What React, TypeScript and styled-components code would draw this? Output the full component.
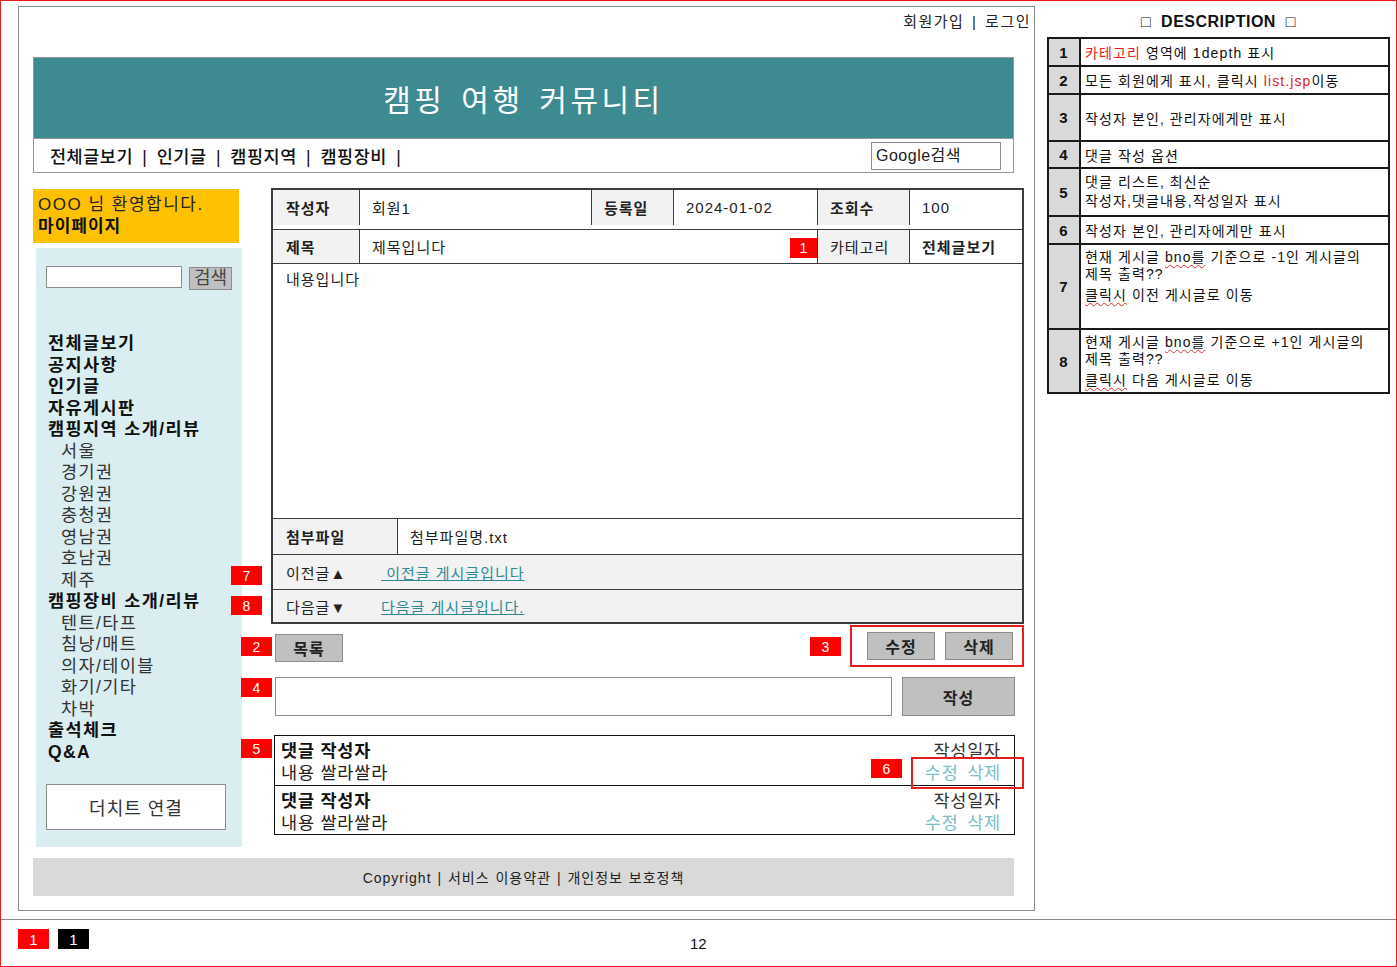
import styled, { createGlobalStyle } from 'styled-components'
import { ReactNode } from 'react'

const GlobalStyle = createGlobalStyle`
  * { box-sizing: border-box; }
  body {
    margin: 0;
    background: #fff;
    color: #111;
    font-family: "Liberation Sans", "Noto Sans CJK KR", sans-serif;
  }
`

type MenuEntry = { label: string; sub?: boolean }

const menu: MenuEntry[] = [
  { label: '전체글보기' },
  { label: '공지사항' },
  { label: '인기글' },
  { label: '자유게시판' },
  { label: '캠핑지역 소개/리뷰' },
  { label: '서울', sub: true },
  { label: '경기권', sub: true },
  { label: '강원권', sub: true },
  { label: '충청권', sub: true },
  { label: '영남권', sub: true },
  { label: '호남권', sub: true },
  { label: '제주', sub: true },
  { label: '캠핑장비 소개/리뷰' },
  { label: '텐트/타프', sub: true },
  { label: '침낭/매트', sub: true },
  { label: '의자/테이블', sub: true },
  { label: '화기/기타', sub: true },
  { label: '차박', sub: true },
  { label: '출석체크' },
  { label: 'Q&A' },
]

type DescRow = { no: number; h: number; top?: boolean; body: ReactNode }

// built at render time, the styled parts are declared further down
const getDescRows = (): DescRow[] => [
  { no: 1, h: 26, body: <p><Red>카테고리</Red> 영역에 1depth 표시</p> },
  { no: 2, h: 28, body: <p>모든 회원에게 표시, 클릭시 <Red>list.jsp</Red>이동</p> },
  { no: 3, h: 47, body: <p>작성자 본인, 관리자에게만 표시</p> },
  { no: 4, h: 27, body: <p>댓글 작성 옵션</p> },
  { no: 5, h: 48, body: <><Line>댓글 리스트, 최신순</Line><Line>작성자,댓글내용,작성일자 표시</Line></> },
  { no: 6, h: 28, body: <p>작성자 본인, 관리자에게만 표시</p> },
  {
    no: 7, h: 85, top: true,
    body: (
      <>
        <Tight>현재 게시글 <Typo>bno를</Typo> 기준으로 -1인 게시글의</Tight>
        <Tight>제목 출력??</Tight>
        <Gap><Typo>클릭시</Typo> 이전 게시글로 이동</Gap>
      </>
    ),
  },
  {
    no: 8, h: 64,
    body: (
      <>
        <Tight>현재 게시글 <Typo>bno를</Typo> 기준으로 +1인 게시글의</Tight>
        <Tight>제목 출력??</Tight>
        <Gap><Typo>클릭시</Typo> 다음 게시글로 이동</Gap>
      </>
    ),
  },
]

const comments = [
  { author: '댓글 작성자', text: '내용 쌀라쌀라', date: '작성일자' },
  { author: '댓글 작성자', text: '내용 쌀라쌀라', date: '작성일자' },
]

const App = () => {
  const descRows = getDescRows()

  return (
    <Page>
      <GlobalStyle />
      <Workspace>
        <Wireframe>
          <TopLinks>회원가입 | 로그인</TopLinks>
          <Header>
            <Banner>캠핑 여행 커뮤니티</Banner>
            <NavBar>
              <NavLinks>전체글보기 | 인기글 | 캠핑지역 | 캠핑장비 |</NavLinks>
              <GoogleBox>Google검색</GoogleBox>
            </NavBar>
          </Header>

          <Body>
            <Sidebar>
              <Welcome>
                <div>OOO 님 환영합니다.</div>
                <strong>마이페이지</strong>
              </Welcome>
              <SideNav>
                <SearchRow>
                  <SearchInput />
                  <SearchButton>검색</SearchButton>
                </SearchRow>
                <Menu>
                  {menu.map((m) => (
                    <MenuItem key={m.label} $sub={m.sub}>{m.label}</MenuItem>
                  ))}
                </Menu>
                <OutLink>더치트 연결</OutLink>
              </SideNav>
            </Sidebar>

            <Main>
              <Board>
                <BoardRow $cols="86px 232px 82px 144px 92px 1fr" $h={39}>
                  <Cell $label>작성자</Cell>
                  <Cell>회원1</Cell>
                  <Cell $label>등록일</Cell>
                  <Cell>2024-01-02</Cell>
                  <Cell $label>조회수</Cell>
                  <Cell>100</Cell>
                </BoardRow>
                <BoardRow $cols="86px 458px 92px 1fr" $h={34}>
                  <Cell $label>제목</Cell>
                  <Cell>제목입니다</Cell>
                  <Cell $shade>카테고리</Cell>
                  <Cell $bold>전체글보기</Cell>
                </BoardRow>
                <ContentArea>내용입니다</ContentArea>
                <BoardRow $cols="124px 1fr" $h={35}>
                  <Cell $label>첨부파일</Cell>
                  <Cell>첨부파일명.txt</Cell>
                </BoardRow>
                <BoardRow $cols="1fr" $h={35} $shade>
                  <Cell>
                    <NavLabel>이전글▲</NavLabel>
                    <PostLink>{' 이전글 게시글입니다'}</PostLink>
                  </Cell>
                </BoardRow>
                <BoardRow $cols="1fr" $h={33} $shade>
                  <Cell>
                    <NavLabel>다음글▼</NavLabel>
                    <PostLink>{'다음글 게시글입니다.'}</PostLink>
                  </Cell>
                </BoardRow>
                <Badge $x={517} $y={48} $w={27} $h={20}>1</Badge>
                <Badge $x={-42} $y={376}>7</Badge>
                <Badge $x={-42} $y={406}>8</Badge>
              </Board>

              <ActionRow>
                <ListButton>
                  목록
                  <Badge $x={-35} $y={2}>2</Badge>
                </ListButton>
                <AdminBox>
                  <GrayButton>수정</GrayButton>
                  <GrayButton>삭제</GrayButton>
                  <Badge $x={-42} $y={10}>3</Badge>
                </AdminBox>
              </ActionRow>

              <CommentForm>
                <CommentInput />
                <SubmitButton>작성</SubmitButton>
                <Badge $x={-30} $y={1}>4</Badge>
              </CommentForm>

              <CommentList>
                {comments.map((c, i) => (
                  <CommentItem key={i} $last={i === comments.length - 1}>
                    <Author>{c.author}</Author>
                    <Meta>{c.date}</Meta>
                    <CommentText>{c.text}</CommentText>
                    <Actions>수정 삭제</Actions>
                    {i === 0 && (
                      <>
                        <Callout />
                        <Badge $x={596} $y={23}>6</Badge>
                      </>
                    )}
                  </CommentItem>
                ))}
                <Badge $x={-34} $y={3}>5</Badge>
              </CommentList>
            </Main>
          </Body>

          <Footer>Copyright | 서비스 이용약관 | 개인정보 보호정책</Footer>
        </Wireframe>

        <DescPanel>
          <DescTitle>□ DESCRIPTION □</DescTitle>
          <DescTable>
            {descRows.map((r) => (
              <DescLine key={r.no} $h={r.h}>
                <DescNo>{r.no}</DescNo>
                <DescText $top={r.top}>{r.body}</DescText>
              </DescLine>
            ))}
          </DescTable>
        </DescPanel>
      </Workspace>

      <BottomBar>
        <Tags>
          <Tag $bg="#ff0000">1</Tag>
          <Tag $bg="#000">1</Tag>
        </Tags>
        <PageNo>12</PageNo>
      </BottomBar>
    </Page>
  )
}

export default App

const Page = styled.div`
  width: 1397px;
  height: 967px;
  border: 1px solid #e51c1c;
  display: flex;
  flex-direction: column;
  overflow: hidden;
`

const Workspace = styled.div`
  height: 919px;
  flex-shrink: 0;
  display: flex;
  align-items: flex-start;
  padding: 5px 0 0 17px;
  border-bottom: 1px solid #8a8a8a;
`

const Wireframe = styled.div`
  width: 1017px;
  height: 905px;
  border: 1px solid #8c8c8c;
  padding-left: 14px;
  display: flex;
  flex-direction: column;
`

const TopLinks = styled.div`
  align-self: flex-end;
  margin-right: 3px;
  height: 30px;
  line-height: 30px;
  font-size: 15px;
  letter-spacing: 1.5px;
  word-spacing: 2px;
  color: #222;
`

const Header = styled.div`
  margin-top: 20px;
  width: 981px;
  border: 1px solid #999;
`

const Banner = styled.div`
  height: 81px;
  background: #3d8b91;
  border-bottom: 1px solid #999;
  color: #fff;
  font-size: 30px;
  letter-spacing: 3.5px;
  word-spacing: 4px;
  display: flex;
  align-items: center;
  justify-content: center;
`

const NavBar = styled.div`
  height: 33px;
  display: flex;
  align-items: center;
  justify-content: space-between;
  padding: 0 12px 0 16px;
`

const NavLinks = styled.div`
  font-size: 17.5px;
  font-weight: 500;
  color: #111;
  letter-spacing: 0.5px;
  word-spacing: 4px;
`

const GoogleBox = styled.div`
  width: 130px;
  height: 28px;
  border: 1px solid #8c8c8c;
  padding-left: 4px;
  font-size: 16px;
  line-height: 26px;
  letter-spacing: 0.5px;
  color: #222;
`

const Body = styled.div`
  margin-top: 15px;
  display: grid;
  grid-template-columns: 209px 753px;
  column-gap: 29px;
  align-items: start;
`

const Sidebar = styled.aside`
  display: flex;
  flex-direction: column;
`

const Welcome = styled.div`
  margin-top: 1px;
  width: 206px;
  height: 54px;
  background: #ffc000;
  padding: 5px 5px;
  font-size: 17px;
  line-height: 22px;
  letter-spacing: 1.5px;
  color: #222;
  white-space: nowrap;

  strong {
    color: #111;
    letter-spacing: 1px;
  }
`

const SideNav = styled.nav`
  margin: 5px 0 0 3px;
  width: 206px;
  height: 599px;
  background: #daedf0;
  padding: 18px 0 0 10px;
`

const SearchRow = styled.div`
  display: flex;
  align-items: flex-start;
`

const SearchInput = styled.div`
  width: 136px;
  height: 22px;
  background: #fff;
  border: 1px solid #8c8c8c;
`

const SearchButton = styled.div`
  margin: 1px 0 0 7px;
  width: 43px;
  height: 23px;
  background: #c0c0c0;
  border: 1px solid #8c8c8c;
  font-size: 18px;
  line-height: 21px;
  text-align: center;
  color: #444;
`

const Menu = styled.ul`
  list-style: none;
  margin: 43px 0 0;
  padding: 0 0 0 2px;
`

const MenuItem = styled.li<{ $sub?: boolean }>`
  font-size: 17.5px;
  line-height: 21.5px;
  height: 21.5px;
  white-space: nowrap;
  letter-spacing: 1.4px;
  padding-left: ${(p) => (p.$sub ? 13 : 0)}px;
  font-weight: ${(p) => (p.$sub ? 400 : 700)};
  color: ${(p) => (p.$sub ? '#333' : '#111')};
`

const OutLink = styled.div`
  margin-top: 21px;
  width: 180px;
  height: 46px;
  background: #fff;
  border: 1px solid #8c8c8c;
  display: flex;
  align-items: center;
  justify-content: center;
  font-size: 18px;
  letter-spacing: 1px;
  color: #333;
`

const Main = styled.section`
  display: flex;
  flex-direction: column;
`

const Board = styled.div`
  position: relative;
  width: 753px;
  border: 2px solid #3c3c3c;
  font-size: 15px;
  letter-spacing: 1px;
`

const BoardRow = styled.div<{ $cols: string; $h: number; $shade?: boolean }>`
  display: grid;
  grid-template-columns: ${(p) => p.$cols};
  height: ${(p) => p.$h}px;
  background: ${(p) => (p.$shade ? '#f2f2f2' : '#fff')};

  &:first-child {
    padding-bottom: 4px;
  }

  & + & {
    border-top: 1px solid #3c3c3c;
  }
`

const Cell = styled.div<{ $label?: boolean; $shade?: boolean; $bold?: boolean }>`
  display: flex;
  align-items: center;
  padding-left: 12px;
  background: ${(p) => (p.$label || p.$shade ? '#f2f2f2' : 'transparent')};
  font-weight: ${(p) => (p.$label || p.$bold ? 700 : 400)};
  color: #222;

  &:first-child {
    padding-left: 13px;
  }

  & + & {
    border-left: 1px solid #3c3c3c;
  }
`

const ContentArea = styled.div`
  height: 256px;
  border-top: 1px solid #3c3c3c;
  border-bottom: 1px solid #3c3c3c;
  padding: 6px 13px;
  line-height: 20px;
  color: #222;
`

const NavLabel = styled.span`
  display: inline-block;
  width: 95px;
  color: #222;
`

const PostLink = styled.a`
  white-space: pre;
  color: #2f8a96;
  text-decoration: underline;
  cursor: pointer;
`

const Badge = styled.span<{ $x: number; $y: number; $w?: number; $h?: number }>`
  position: absolute;
  left: ${(p) => p.$x}px;
  top: ${(p) => p.$y}px;
  width: ${(p) => p.$w ?? 31}px;
  height: ${(p) => p.$h ?? 19}px;
  background: #ff0000;
  color: #fff;
  font-family: "Liberation Sans", sans-serif;
  font-size: 14px;
  font-weight: 400;
  letter-spacing: 0;
  display: flex;
  align-items: center;
  justify-content: center;
`

const ActionRow = styled.div`
  margin-top: 1px;
  display: flex;
  justify-content: space-between;
  align-items: flex-start;
`

const GrayButton = styled.div`
  width: 68px;
  height: 28px;
  background: #c0c0c0;
  border: 1px solid #8c8c8c;
  display: flex;
  align-items: center;
  justify-content: center;
  font-size: 16px;
  font-weight: 700;
  letter-spacing: 1px;
  color: #222;
`

const ListButton = styled(GrayButton)`
  position: relative;
  margin: 9px 0 0 4px;
`

const AdminBox = styled.div`
  position: relative;
  width: 174px;
  height: 42px;
  border: 2px solid #e51c1c;
  padding: 5px 8px 0 15px;
  display: flex;
  gap: 10px;
`

const CommentForm = styled.div`
  position: relative;
  margin-top: 10px;
  padding-left: 4px;
  display: flex;
  gap: 10px;
`

const CommentInput = styled.div`
  width: 617px;
  height: 39px;
  background: #fff;
  border: 1px solid #8c8c8c;
`

const SubmitButton = styled(GrayButton)`
  width: 113px;
  height: 39px;
`

const CommentList = styled.div`
  position: relative;
  margin: 19px 0 0 3px;
  width: 741px;
  border: 1px solid #111;
`

const CommentItem = styled.div<{ $last?: boolean }>`
  position: relative;
  height: ${(p) => (p.$last ? 48 : 50)}px;
  border-bottom: ${(p) => (p.$last ? 'none' : '1px solid #111')};
  padding: 2px 13px 0 6px;
  display: grid;
  grid-template-columns: 1fr auto;
  grid-auto-rows: 22px;
  align-items: center;
  font-size: 17.5px;
  letter-spacing: 0.8px;
`

const Author = styled.div`
  font-weight: 700;
  color: #111;
`

const CommentText = styled.div`
  color: #222;
`

const Meta = styled.div`
  text-align: right;
  color: #333;
`

const Actions = styled.div`
  text-align: right;
  color: #7cbfc6;
  word-spacing: 3px;
`

const Callout = styled.div`
  position: absolute;
  right: -10px;
  top: 21px;
  width: 113px;
  height: 32px;
  border: 2px solid #e51c1c;
`

const Footer = styled.footer`
  margin-top: 11px;
  width: 981px;
  height: 38px;
  background: #d9d9d9;
  display: flex;
  align-items: center;
  justify-content: center;
  font-size: 14px;
  letter-spacing: 1px;
  word-spacing: 1px;
  color: #222;
`

const DescPanel = styled.div`
  margin-left: 12px;
  width: 343px;
  margin-top: -5px;
`

const DescTitle = styled.div`
  height: 36px;
  padding-top: 6px;
  line-height: 30px;
  text-align: center;
  font-size: 16px;
  font-weight: 700;
  letter-spacing: 0.5px;
  word-spacing: 5px;
  color: #111;
`

const DescTable = styled.div`
  border: 2px solid #1a1a1a;
  font-size: 14px;
  letter-spacing: 1.1px;
  color: #111;
`

const DescLine = styled.div<{ $h: number }>`
  display: grid;
  grid-template-columns: 32px 1fr;
  height: ${(p) => p.$h}px;

  & + & {
    border-top: 2px solid #1a1a1a;
  }
`

const DescNo = styled.div`
  background: #d9d9d9;
  border-right: 2px solid #1a1a1a;
  display: flex;
  align-items: center;
  justify-content: center;
  font-weight: 700;
  font-size: 15px;
`

const DescText = styled.div<{ $top?: boolean }>`
  padding: ${(p) => (p.$top ? '4px' : '0')} 2px 0 4px;
  display: flex;
  flex-direction: column;
  justify-content: ${(p) => (p.$top ? 'flex-start' : 'center')};
  white-space: nowrap;

  p {
    margin: 0;
  }
`

const Line = styled.p`
  line-height: 19px;
`

const Tight = styled.p`
  line-height: 17px;
`

const Gap = styled.p`
  margin-top: 4px !important;
  line-height: 17px;
`

const Red = styled.span`
  color: #e51c1c;
`

const Typo = styled.span`
  text-decoration: underline wavy #e03030;
  text-decoration-thickness: 1px;
  text-underline-offset: 2px;
`

const BottomBar = styled.div`
  flex: 1;
  display: grid;
  grid-template-columns: 1fr auto 1fr;
  padding: 9px 0 0 17px;
`

const Tags = styled.div`
  display: flex;
  gap: 9px;
  align-items: flex-start;
`

const Tag = styled.span<{ $bg: string }>`
  width: 31px;
  height: 20px;
  background: ${(p) => p.$bg};
  color: #fff;
  font-size: 15px;
  display: flex;
  align-items: center;
  justify-content: center;
`

const PageNo = styled.div`
  padding-top: 6px;
  margin-left: -17px;
  font-size: 15px;
  color: #111;
`
